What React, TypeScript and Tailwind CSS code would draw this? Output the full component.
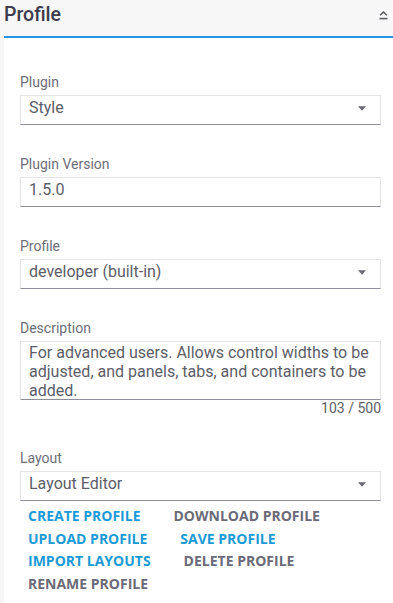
import { useState } from "react";

type Field = {
  label: string;
  value: string;
  select?: boolean;
};

const fields: Field[] = [
  { label: "Plugin", value: "Style", select: true },
  { label: "Plugin Version", value: "1.5.0" },
  { label: "Profile", value: "developer (built-in)", select: true },
];

const DESCRIPTION =
  "For advanced users. Allows control widths to be adjusted, and panels, tabs, and containers to be added.";

const actions = [
  { name: "Create Profile", active: true },
  { name: "Download Profile", active: false },
  { name: "Upload Profile", active: true },
  { name: "Save Profile", active: true },
  { name: "Import Layouts", active: true },
  { name: "Delete Profile", active: false },
  { name: "Rename Profile", active: false },
];

const Caret = () => (
  <svg width="8" height="5" viewBox="0 0 8 5" className="shrink-0">
    <path d="M0 0.2h8L4 4.7z" fill="#6a6a72" />
  </svg>
);

function BoxField({ field }: { field: Field }) {
  return (
    <div className="mb-[31px]">
      <div className="h-[16px] leading-[16px] text-[14px] text-[#6e6e79] mb-[5px]">
        {field.label}
      </div>
      <div className="h-[30px] flex items-center justify-between pl-[8px] pr-[14px] pb-[3px] border border-[#e4e4e8] border-b-[#8e8e9a] bg-white">
        <span className="text-[16px] text-[#5d5d69] leading-[18.75px]">{field.value}</span>
        {field.select && <Caret />}
      </div>
    </div>
  );
}

export default function App() {
  const [open, setOpen] = useState(true);

  return (
    <div
      className="min-h-screen bg-[#f7f7f7] pl-[4px]"
      style={{ fontFamily: "Roboto, 'Liberation Sans', sans-serif" }}
    >
      {/* Header */}
      <div className="h-[38px] flex items-start justify-between border-b-2 border-[#2a93e6]">
        <h1 className="pt-[4px] text-[19.5px] leading-[22px] font-medium text-[#3b3b4d]">
          Profile
        </h1>
        <button onClick={() => setOpen(!open)} className="mt-[11px] mr-[5px]">
          <svg width="9" height="9" viewBox="0 0 9 9">
            <path d="M1.2 4.2L4.5 1L7.8 4.2" fill="none" stroke="#5e5e66" strokeWidth="1.6" />
            <rect x="0.5" y="6.8" width="8" height="1.6" fill="#5e5e66" />
          </svg>
        </button>
      </div>

      {/* Body */}
      {open && (
        <div className="bg-white pt-[36px] pl-[16px] pr-[12px] pb-[20px]">
          {fields.map((f) => (
            <BoxField key={f.label} field={f} />
          ))}

          {/* Description */}
          <div className="mb-[34px]">
            <div className="h-[16px] leading-[16px] text-[14px] text-[#6e6e79] mb-[5px]">
              Description
            </div>
            <textarea
              readOnly
              value={DESCRIPTION}
              className="block w-full h-[59px] resize-none overflow-hidden pl-[8px] pr-[2px] pt-[2px] text-[16px] leading-[18.75px] text-[#5d5d69] border border-[#e4e4e8] border-b-[#8e8e9a] outline-none"
            />
            <div className="h-[16px] leading-[16px] text-[14px] text-[#5d5d69] text-right">
              103 / 500
            </div>
          </div>

          {/* Layout */}
          <div>
            <div className="h-[16px] leading-[16px] text-[14px] text-[#6e6e79] mb-[5px]">
              Layout
            </div>
            <div className="h-[30px] flex items-center justify-between pl-[8px] pr-[14px] pb-[3px] border border-[#e4e4e8] border-b-[#8e8e9a]">
              <span className="text-[16px] text-[#5d5d69] leading-[18.75px]">Layout Editor</span>
              <Caret />
            </div>
          </div>

          {/* Actions */}
          <div
            className="mt-[4px] flex flex-wrap gap-x-[17px]"
            style={{ fontFamily: "'Open Sans', 'Liberation Sans', sans-serif" }}
          >
            {actions.map((a) => (
              <button
                key={a.name}
                className={`h-[22.6px] leading-[22.6px] px-[8px] text-[14px] font-bold uppercase ${
                  a.active ? "text-[#1a9ad6]" : "text-[#6b6a78]"
                }`}
              >
                {a.name}
              </button>
            ))}
          </div>
        </div>
      )}
    </div>
  );
}
